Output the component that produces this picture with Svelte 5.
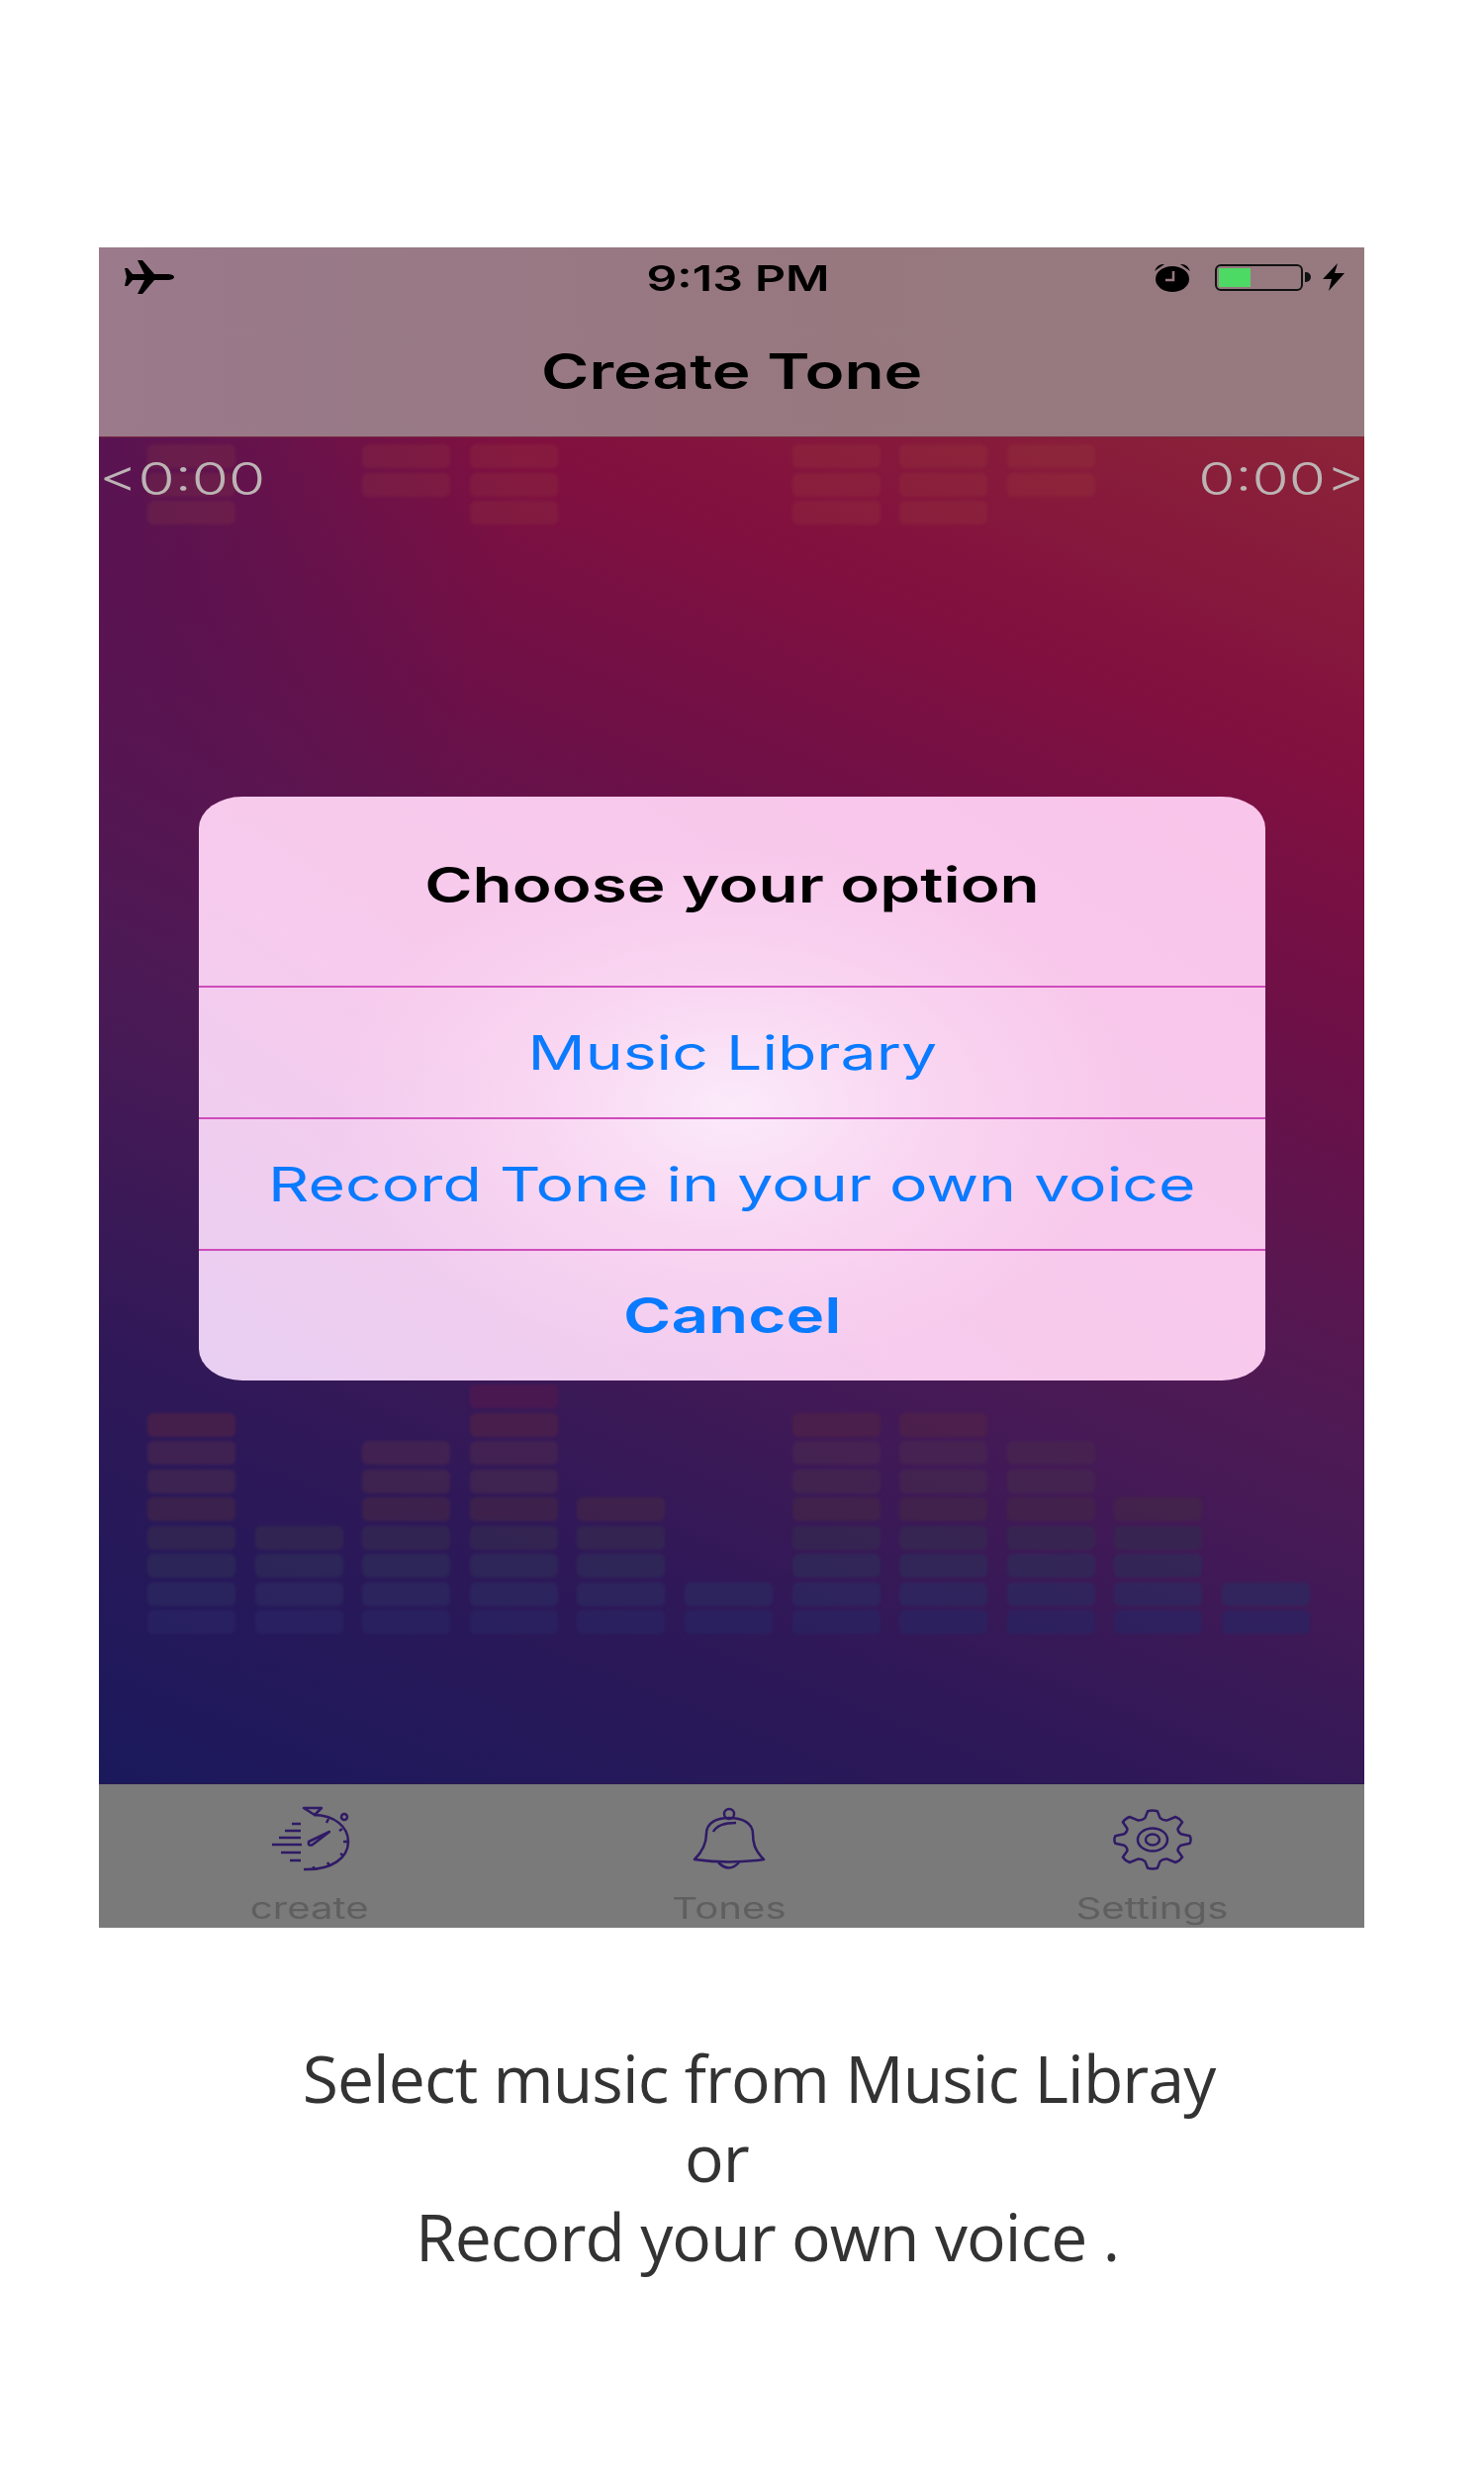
<script>
  // bars counted from the bottom row up, one entry per column
  const lower = [8, 4, 7, 9, 5, 2, 8, 8, 7, 5, 2];
  const upper = [3, 0, 2, 3, 0, 0, 3, 3, 2, 0, 0];
  const lowerColors = ['#2a2463', '#2d2a60', '#2f2c58', '#352a50', '#432648', '#45284e', '#482650', '#502248', '#52184f'];

  function gearPath(cx, cy, rx, ry, teeth) {
    const step = (Math.PI * 2) / teeth;
    const pt = (a, r) => `${(cx + Math.sin(a) * rx * r).toFixed(1)} ${(cy - Math.cos(a) * ry * r).toFixed(1)}`;
    let d = '';
    for (let i = 0; i < teeth; i++) {
      const a = i * step;
      d += `${i === 0 ? 'M' : 'L'}${pt(a - 0.13, 1)} Q${pt(a, 1.04)} ${pt(a + 0.13, 1)} `;
      d += `L${pt(a + 0.26, 0.78)} Q${pt(a + step / 2, 0.72)} ${pt(a + step - 0.26, 0.78)} `;
    }
    return d + 'Z';
  }

  const gear = gearPath(40, 31, 38, 29, 8);
</script>

<div class="page">
  <div class="phone">
    <header class="nav">
      <div class="status">
        <svg class="plane" viewBox="0 0 50 34" width="50" height="34">
          <path d="M50 17 C50 15 47 14 43 14 L30 14 L18 0 L13 0 L20 14 L8 14 L3 8 L0 8 L2 17 L0 26 L3 26 L8 20 L20 20 L13 34 L18 34 L30 20 L43 20 C47 20 50 19 50 17Z" />
        </svg>
        <span class="time"><span class="wide">9:13 PM</span></span>
        <div class="status-right">
          <svg viewBox="0 0 40 30" width="40" height="30">
            <path d="M2 9 Q5 1 12 2 Z M38 9 Q35 1 28 2 Z" />
            <ellipse cx="20" cy="17" rx="17" ry="13" />
            <path d="M21 9 V18 H13" fill="none" stroke="#97787f" stroke-width="2.5" />
          </svg>
          <div class="battery"><div class="charge"></div></div>
          <div class="nub"></div>
          <svg class="bolt" viewBox="0 0 22 28" width="22" height="28">
            <path d="M15 0 L0 16 H9 L6 28 L22 10 H12Z" />
          </svg>
        </div>
      </div>
      <h1><span class="wide">Create Tone</span></h1>
    </header>

    <main class="stage">
      <div class="eq eq-top">
        {#each upper as n}
          <div class="col">
            {#each Array(n) as _}
              <div class="bar bar-top"></div>
            {/each}
          </div>
        {/each}
      </div>

      <div class="times">
        <span class="wide left">&lt;0:00</span>
        <span class="wide right">0:00&gt;</span>
      </div>

      <div class="eq eq-bottom">
        {#each lower as n}
          <div class="col">
            {#each Array(n) as _, i}
              <div class="bar" style:background={lowerColors[n - 1 - i]}></div>
            {/each}
          </div>
        {/each}
      </div>

      <div class="dialog">
        <div class="dialog-title"><span class="wide">Choose your option</span></div>
        <button><span class="wide">Music Library</span></button>
        <button><span class="wide">Record Tone in your own voice</span></button>
        <button class="cancel"><span class="wide">Cancel</span></button>
      </div>
    </main>

    <nav class="tabs">
      <div class="tab">
        <svg class="clock" viewBox="20 24 90 68" width="90" height="68">
          <path d="M57 26 H75 L68 33 Z" />
          <path d="M67 33 C88 33 102 45 102 60 C102 76 86 89 57 88" />
          <circle cx="98" cy="35" r="3" />
          <path d="M45 42 H54 M38 49 H54 M32 56 H54 M25 63 H55 M34 71 H54 M43 79 H54" />
          <path d="M83 50 L62 60 Q61 65 66 63 Z" />
          <path d="M82 37 L80 41 M96 47 L93 49 M101 60 H97 M97 74 L94 72 M83 84 L81 81 M67 88 V85" />
        </svg>
        <span class="wide">create</span>
      </div>
      <div class="tab">
        <svg viewBox="20 24 78 68" width="78" height="68">
          <circle cx="58" cy="32" r="5" />
          <path d="M23 78 C33 68 35 60 35 52 C35 41 45 36 58 36 C71 36 82 41 82 52 C82 60 83 68 93 78 Q58 83 23 78Z" />
          <path d="M42 50 C45 44 54 41 65 41" />
          <path d="M47 81 Q58 92 68 81" />
        </svg>
        <span class="wide">Tones</span>
      </div>
      <div class="tab">
        <svg viewBox="0 0 80 62" width="80" height="62">
          <path d={gear} />
          <ellipse cx="40" cy="31" rx="15" ry="11.5" />
          <ellipse cx="40" cy="31" rx="7" ry="5.5" />
        </svg>
        <span class="wide">Settings</span>
      </div>
    </nav>
  </div>

  <section class="caption">
    <p class="line-one">Select music from Music Libray</p>
    <p class="line-two">or</p>
    <p class="line-three">Record your own voice .</p>
  </section>
</div>

<style>
  .page {
    height: 2500px;
    overflow: hidden;
    background: #fff;
    padding: 250px 121px 0 100px;
    box-sizing: border-box;
    font-family: Inter, "Liberation Sans", sans-serif;
  }

  .wide {
    display: inline-block;
    transform: scaleX(1.34);
    white-space: nowrap;
  }

  .phone {
    display: flex;
    flex-direction: column;
    height: 1698px;
  }

  .nav {
    height: 192px;
    flex: none;
    background: linear-gradient(90deg, #9a7a8b, #97787f 60%, #967a80);
    color: #000;
    box-sizing: border-box;
    border-bottom: 1px solid #7a2a40;
  }

  .status {
    display: grid;
    grid-template-columns: 1fr auto 1fr;
    align-items: center;
    height: 60px;
    padding: 0 20px 0 26px;
  }

  .plane {
    fill: #000;
  }

  .time {
    font-size: 36px;
    font-weight: 600;
    margin: 1px 0 0 7px;
  }

  .status-right {
    display: flex;
    align-items: center;
    justify-content: flex-end;
  }

  .status-right svg {
    fill: #000;
  }

  .battery {
    width: 89px;
    height: 27px;
    margin-left: 23px;
    padding: 2px;
    box-sizing: border-box;
    border: 2px solid #111;
    border-radius: 6px;
  }

  .charge {
    width: 32px;
    height: 100%;
    background: #4cd964;
  }

  .nub {
    width: 6px;
    height: 10px;
    margin-left: 2px;
    background: #111;
    border-radius: 0 5px 5px 0;
  }

  .bolt {
    margin-left: 12px;
  }

  h1 {
    margin: 0;
    padding-top: 40px;
    font-size: 49px;
    line-height: 52px;
    font-weight: 600;
    text-align: center;
  }

  .stage {
    position: relative;
    flex: 1;
    display: flex;
    flex-direction: column;
    background:
      radial-gradient(ellipse 420px 620px at 0 0, rgba(70, 22, 90, 0.6), rgba(70, 22, 90, 0)),
      linear-gradient(22deg, #1a195c 0%, #2e1858 22%, #4d1a55 45%, #6c1048 66%, #82103f 82%, #8c2438 100%);
  }

  .eq {
    display: flex;
    gap: 19.6px;
    padding-left: 49px;
    filter: blur(1.5px);
  }

  .eq-top {
    padding-top: 7px;
  }

  .eq-bottom {
    margin-top: auto;
    padding-bottom: 151px;
    align-items: flex-end;
    opacity: 0.7;
  }

  .col {
    width: 89px;
    display: flex;
    flex-direction: column;
    gap: 4.5px;
  }

  .bar {
    height: 24px;
    border-radius: 6px;
  }

  .bar-top {
    background: rgba(170, 90, 60, 0.14);
  }

  .times {
    position: absolute;
    top: 20px;
    left: 0;
    right: 0;
    display: flex;
    justify-content: space-between;
    font-size: 45px;
    line-height: 44px;
    font-weight: 300;
    color: #bcb4b4;
  }

  .left {
    transform-origin: left;
  }

  .right {
    transform-origin: right;
  }

  .dialog {
    position: absolute;
    top: 363px;
    left: 101px;
    width: 1078px;
    border-radius: 44px / 32px;
    overflow: hidden;
    background:
      radial-gradient(ellipse 400px 260px at 50% 53%, #fbeafa 0%, rgba(250, 220, 244, 0.65) 50%, rgba(249, 198, 234, 0) 100%),
      linear-gradient(35deg, #e8cff2 0%, #f7cbed 40%, #f9c5ea 100%);
  }

  .dialog-title {
    height: 191px;
    padding-top: 64px;
    box-sizing: border-box;
    text-align: center;
    font-size: 49px;
    line-height: 52px;
    font-weight: 600;
    color: #000;
  }

  button {
    display: block;
    width: 100%;
    height: 133px;
    padding: 0;
    border: 0;
    border-top: 2px solid #cf4cbb;
    background: none;
    font: inherit;
    font-size: 48px;
    color: #0a7aff;
  }

  .cancel {
    font-weight: 600;
    font-size: 49px;
  }

  .tabs {
    height: 146px;
    flex: none;
    box-sizing: border-box;
    display: grid;
    grid-template-columns: 425px 425px 1fr;
    background: #7a7a7a;
    border-top: 1px solid #2a1650;
  }

  .tab {
    display: flex;
    flex-direction: column;
    align-items: center;
    padding-top: 22px;
    font-size: 30px;
    line-height: 30px;
    color: #5f5f5f;
    overflow: hidden;
  }

  .tab svg {
    fill: none;
    stroke: #2f1a66;
    stroke-width: 2.5;
    stroke-linejoin: round;
    height: 68px;
    margin-bottom: 20px;
  }

  .tab .clock {
    margin-left: 4px;
  }

  .caption {
    margin-top: 111px;
    font-family: "Open Sans", sans-serif;
    font-size: 66px;
    line-height: 80px;
    color: #333;
  }

  .caption p {
    margin: 0;
    text-align: center;
    white-space: nowrap;
    letter-spacing: -0.9px;
  }

  .line-one {
    padding-left: 55px;
  }

  .line-two {
    padding-right: 30px;
    margin-top: -2px;
  }

  .line-three {
    padding-left: 72px;
    margin-top: 2px;
  }
</style>
